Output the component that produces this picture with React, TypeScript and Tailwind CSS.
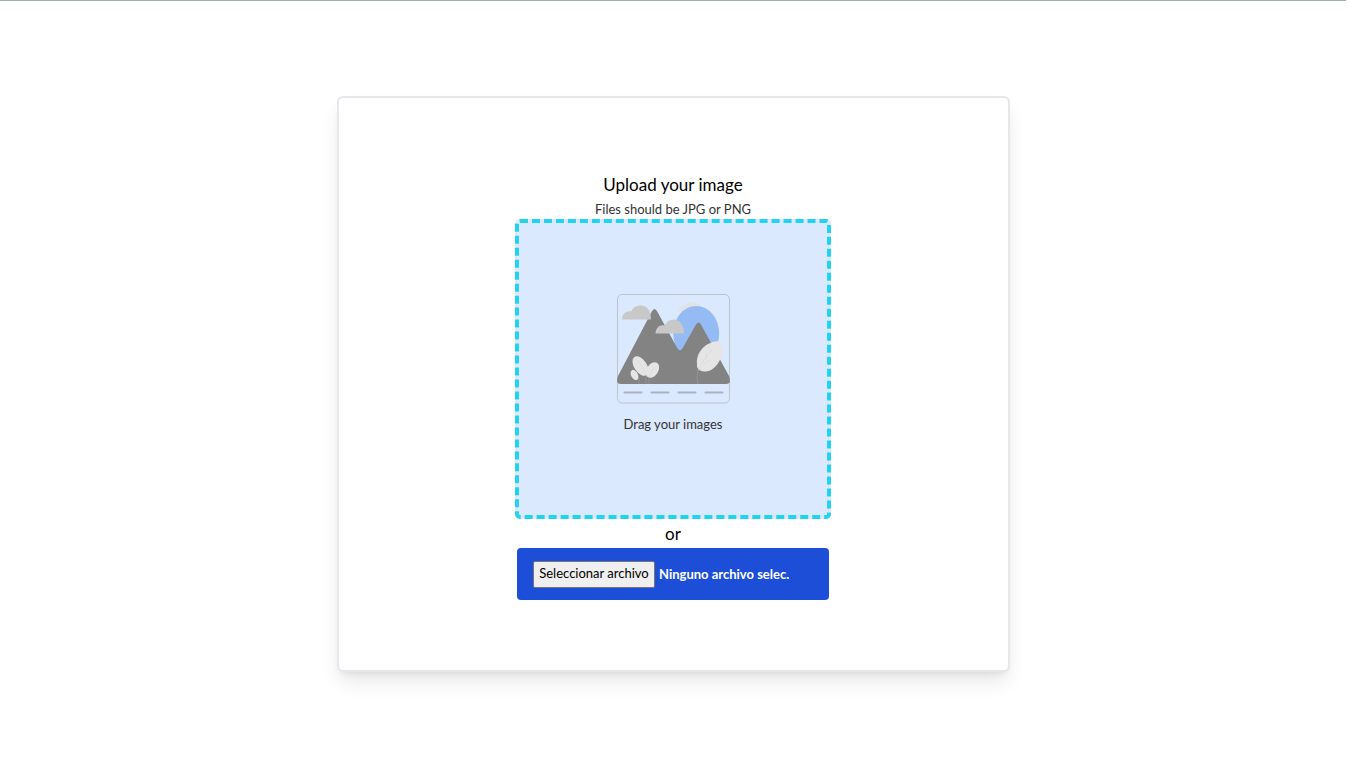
import { useState } from "react";
import type { ChangeEvent, DragEvent } from "react";

function LandscapePicture() {
  return (
    <svg viewBox="0 0 113 110" className="h-[110px] w-[113px]" aria-hidden="true">
      <rect x="0.5" y="0.5" width="112" height="108.5" rx="4.5" fill="none" stroke="#bfc4ca" />
      <path d="M61 17c1-4 4-6 7-5 2-4 6-5 10-3 5 0 7 3 7 8Z" fill="#e0e2e5" />
      <ellipse cx="79.2" cy="39.5" rx="23" ry="27.5" fill="#94bbf3" />
      <path
        d="M1 82 34.8 17.5Q37.500 12.500 40.200 17.500L60 53.500Q63 59 66 53.500L79 30.500Q81.500 26.500 84 30.500L112 82Q115 90 109 90H4Q-2 90 1 82Z"
        fill="#838383"
      />
      <path d="M5 25.500c.5-6 4-9 9-8 2-4 5-6 10-6 6 0 10 5 10 14Z" fill="#c8c8c8" />
      <path d="M38.500 39.500c.5-6 4-9 9-8 2-4 5-6 9-6 6 0 10.500 5 10.500 14Z" fill="#c8c8c8" />
      <g fill="#e5e5e5">
        <ellipse cx="23.500" cy="72" rx="6.300" ry="11" transform="rotate(-34 23.500 72)" />
        <ellipse cx="35.500" cy="76" rx="5.800" ry="8.500" transform="rotate(32 35.500 76)" />
        <ellipse cx="17.500" cy="81" rx="3.400" ry="5.500" transform="rotate(-28 17.500 81)" />
        <path d="M80 70c-1-12 9-23 23-23 5 5 2 20-5 26-6 6-15 6-18 0Z" />
      </g>
      <g fill="none" stroke="#d4d4d4" strokeWidth="0.500">
        <path d="M19 65c4 3 7 8 10 15M39 72c-4 4-6 8-7 11" />
        <path d="M96 55C91 60 83 70 81 77M89 65l1-6M86 70l8-4" />
      </g>
      <g fill="none" stroke="#999" strokeWidth="0.700">
        <path d="M22 84v6M29 82v8M32 83v7M81 76q-2 7 0 14" />
      </g>
      <path d="M7.500 98.500h17M34.500 98.500h17M61.500 98.500h17M88.500 98.500h17" stroke="#a9b2bf" strokeWidth="2" strokeLinecap="round" />
    </svg>
  );
}

export default function App() {
  const [fileName, setFileName] = useState("Ninguno archivo selec.");

  const selectFile = (file?: File) => {
    if (file) setFileName(file.name);
  };

  const handleDrop = (event: DragEvent<HTMLDivElement>) => {
    event.preventDefault();
    selectFile(event.dataTransfer.files[0]);
  };

  return (
    <div className="min-h-screen bg-white pr-[15px] font-['Lato','Liberation_Sans',sans-serif] text-black">
      <div className="h-px bg-[#9cb0a4]" />
      <main className="flex justify-center pt-[95px] pb-[95px]">
        <section className="flex w-1/2 flex-col items-center rounded-md border-2 border-gray-200 bg-white pt-[72px] pb-[70px] shadow-[0_12px_20px_-3px_rgba(0,0,0,0.1),0_4px_7px_-4px_rgba(0,0,0,0.1)]">
          <h1 className="text-[17px] leading-[30px]">Upload your image</h1>
          <p className="text-[13px] leading-[19px] text-[#333]">Files should be JPG or PNG</p>
          <div
            onDragOver={(event) => event.preventDefault()}
            onDrop={handleDrop}
            className="flex h-[300px] w-[316px] flex-col items-center rounded-[5px] border-4 border-dashed border-[#22d3ee] bg-[#dbe9fe] pt-[71px]"
          >
            <LandscapePicture />
            <p className="mt-[10px] text-[13px] leading-5 text-[#333]">Drag your images</p>
          </div>
          <p className="text-[17px] leading-[29px]">or</p>
          <label className="flex h-[52px] w-[312px] cursor-pointer items-center gap-1 rounded bg-[#1d4ed8] px-4 text-[13px] text-white focus-within:ring-2 focus-within:ring-cyan-300">
            <input
              type="file"
              accept="image/png,image/jpeg"
              className="sr-only"
              onChange={(event: ChangeEvent<HTMLInputElement>) => selectFile(event.target.files?.[0])}
            />
            <span className="flex h-[27px] w-[122px] shrink-0 items-center justify-center rounded-[2px] border border-[#767676] bg-[#efefef] whitespace-nowrap text-black">
              Seleccionar archivo
            </span>
            <span className="truncate leading-5 font-bold">{fileName}</span>
          </label>
        </section>
      </main>
    </div>
  );
}
